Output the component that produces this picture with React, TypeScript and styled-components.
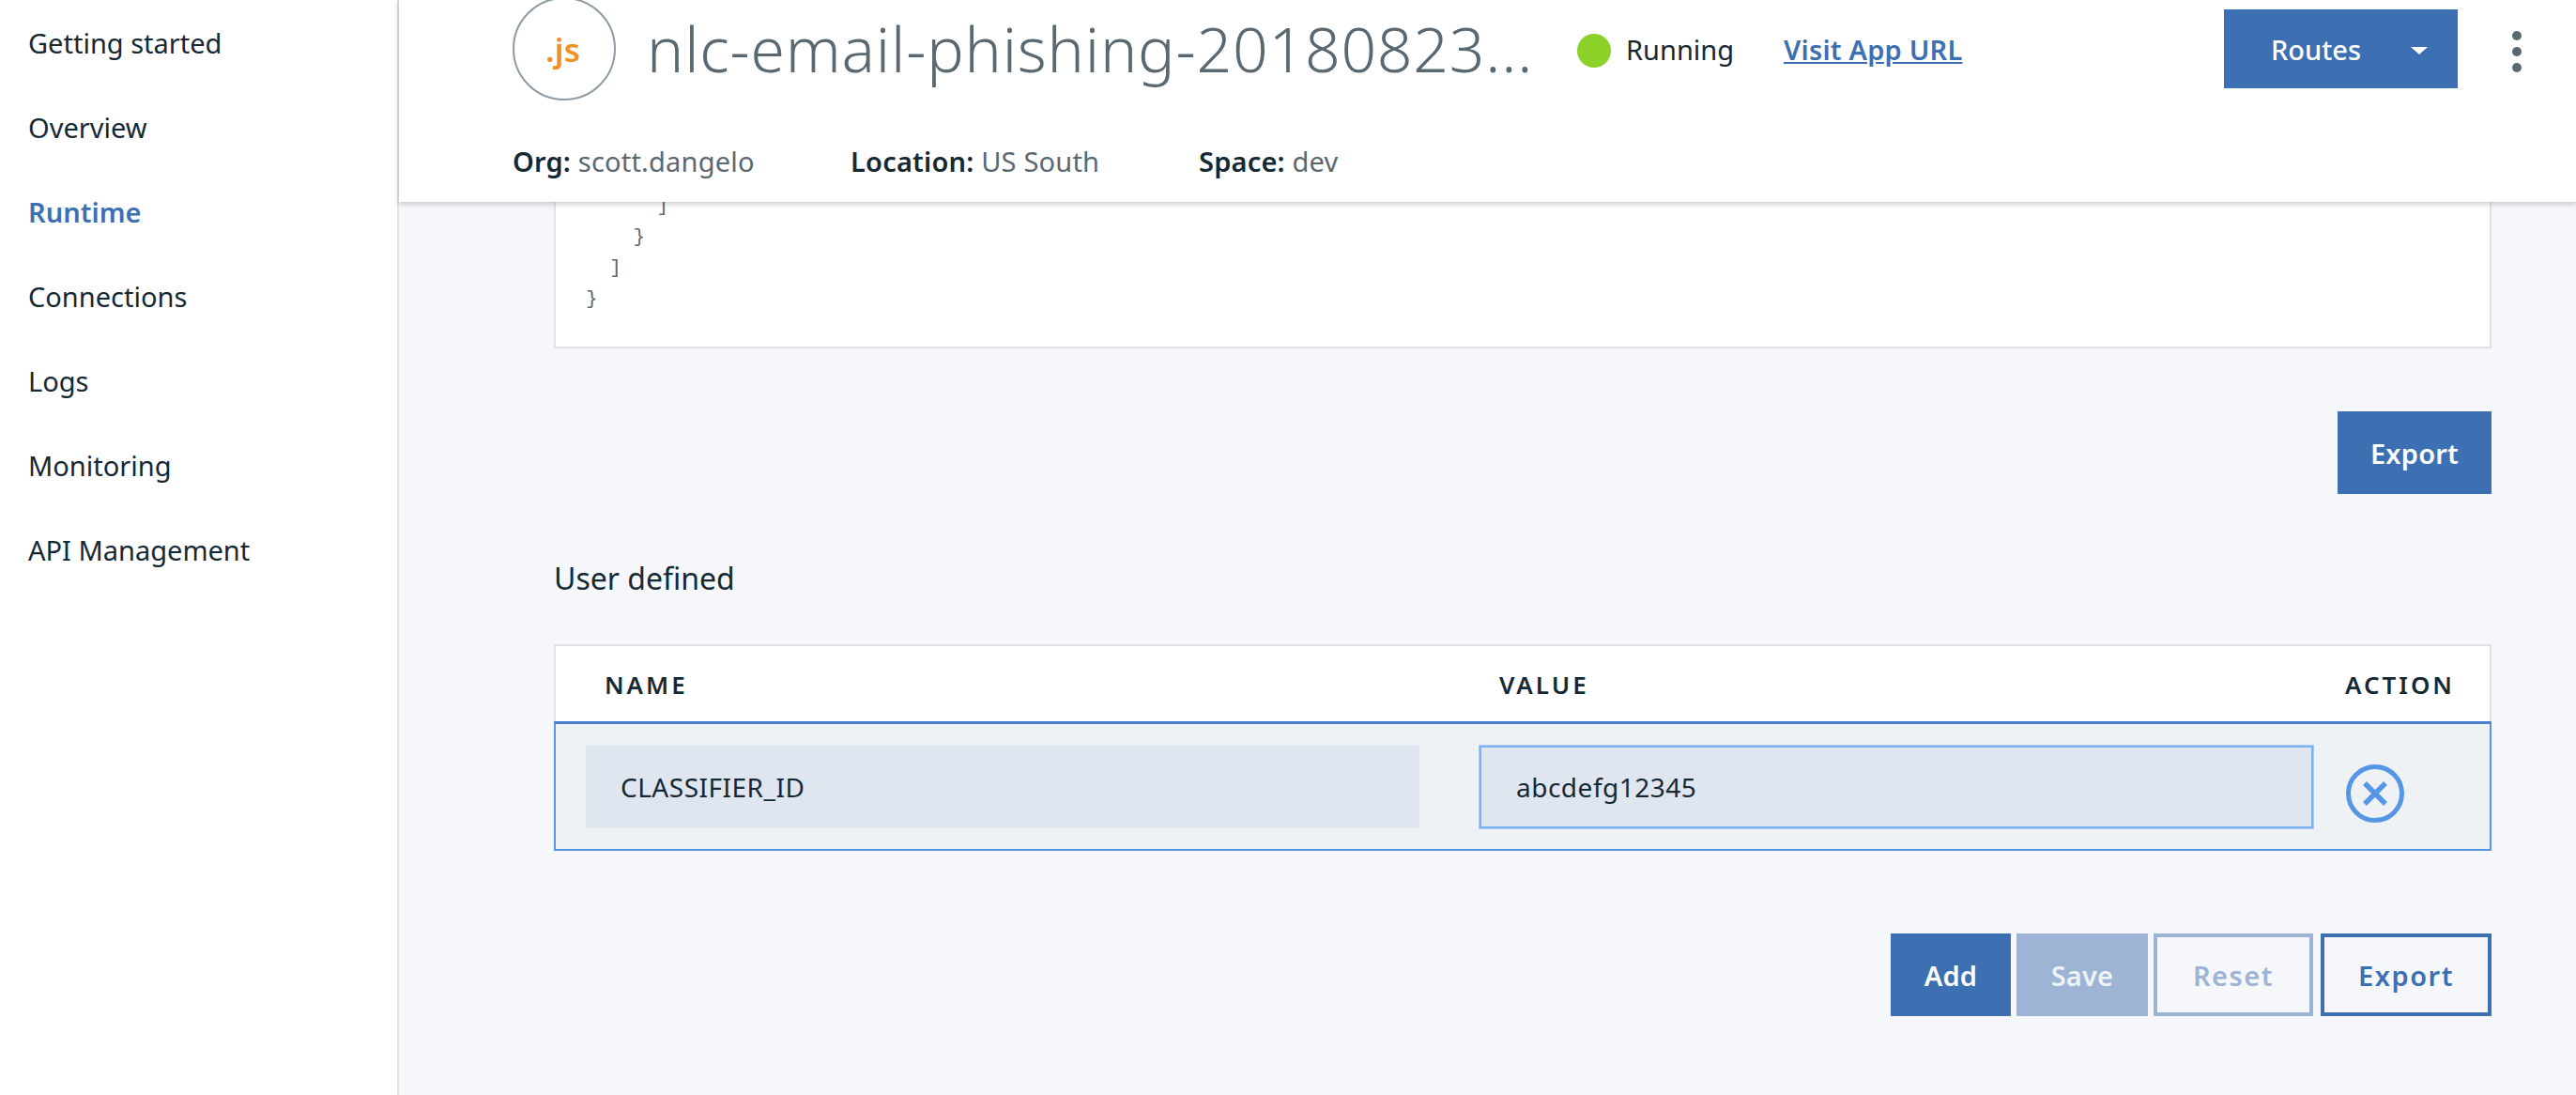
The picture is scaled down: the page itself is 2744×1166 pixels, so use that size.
import React from 'react';
import styled, { createGlobalStyle } from 'styled-components';

const FONT = `'Noto Sans', 'Liberation Sans', sans-serif`;
const MONO = `'Liberation Mono', monospace`;

const GlobalStyle = createGlobalStyle`
  html, body {
    margin: 0;
    padding: 0;
    background: #f5f7fa;
    overflow: hidden;
  }
  * {
    box-sizing: border-box;
  }
`;

const NAV_ITEMS = ['Getting started', 'Overview', 'Runtime', 'Connections', 'Logs', 'Monitoring', 'API Management'];
const CODE_LINES = ['      ]', '    }', '  ]', '}'];

const Page = styled.div`
  display: flex;
  width: 2744px;
  height: 1166px;
  font-family: ${FONT};
  color: #152935;
  overflow: hidden;
`;

const Sidebar = styled.nav`
  flex: none;
  display: flex;
  flex-direction: column;
  width: 425px;
  padding: 1px 0 0 30px;
  background: #fff;
  border-right: 2px solid #dfe3e6;
`;

const NavItem = styled.a<{ $active?: boolean }>`
  height: 90px;
  line-height: 90px;
  font-size: 29px;
  font-weight: ${(p) => (p.$active ? 600 : 400)};
  color: ${(p) => (p.$active ? '#3d70b2' : '#152935')};
`;

const Main = styled.div`
  flex: 1;
  display: flex;
  flex-direction: column;
  min-width: 0;
`;

const Header = styled.header`
  position: relative;
  z-index: 2;
  flex: none;
  height: 215px;
  padding: 0 0 0 121px;
  background: #fff;
  box-shadow: 0 2px 6px rgba(0, 0, 0, 0.22);
`;

const TitleRow = styled.div`
  display: flex;
  align-items: center;
  height: 107px;
`;

const Logo = styled.div`
  flex: none;
  display: flex;
  align-items: center;
  justify-content: center;
  width: 110px;
  height: 110px;
  margin-top: -3px;
  padding-right: 3px;
  border: 2px solid #8c9ba5;
  border-radius: 50%;
  color: #f19027;
  font-size: 35px;
  font-weight: 600;
`;

const Title = styled.h1`
  margin: -5px 0 0 33px;
  width: 945px;
  font-size: 66px;
  font-weight: 300;
  letter-spacing: 0.8px;
  color: #5a6872;
  white-space: nowrap;
`;

const StatusDot = styled.span`
  flex: none;
  width: 36px;
  height: 36px;
  margin-left: 46px;
  border-radius: 50%;
  background: #8cd128;
`;

const StatusText = styled.span`
  margin: -2px 0 0 16px;
  font-size: 29px;
`;

const AppLink = styled.a`
  margin: -2px 0 0 53px;
  font-size: 29px;
  font-weight: 600;
  letter-spacing: 0.2px;
  color: #3d70b2;
  text-decoration: underline;
`;

const RoutesButton = styled.button`
  flex: none;
  display: flex;
  align-items: center;
  justify-content: space-between;
  width: 249px;
  height: 84px;
  margin: 0 0 3px auto;
  padding: 0 32px 0 50px;
  border: 0;
  background: #3d70b2;
  color: #fff;
  font-family: ${FONT};
  font-size: 29px;
  font-weight: 500;
`;

const Caret = styled.span`
  width: 0;
  height: 0;
  margin-top: 4px;
  border-left: 9px solid transparent;
  border-right: 9px solid transparent;
  border-top: 8px solid #fff;
`;

const KebabWrap = styled.div`
  flex: none;
  display: flex;
  justify-content: center;
  width: 126px;
  margin-top: 3px;
`;

const MetaRow = styled.div`
  display: flex;
  align-items: center;
  height: 62px;
  margin-top: 33px;
  font-size: 29px;
`;

const MetaItem = styled.span<{ $width: number }>`
  width: ${(p) => p.$width}px;
  letter-spacing: 0.2px;
  color: #5a6872;
  b {
    font-weight: 600;
    color: #152935;
  }
`;

const Content = styled.main`
  flex: 1;
  display: flex;
  flex-direction: column;
  padding: 0 90px 0 165px;
`;

const CodeBox = styled.pre`
  flex: none;
  display: flex;
  flex-direction: column;
  justify-content: flex-end;
  height: 156px;
  margin: 0;
  padding: 0 0 34px 32px;
  overflow: hidden;
  background: #fff;
  border: 2px solid #dfe3e6;
  border-top: 0;
  font-family: ${MONO};
  font-size: 21px;
  line-height: 33px;
  color: #5a6872;
`;

const ButtonRow = styled.div<{ $top: number }>`
  display: flex;
  justify-content: flex-end;
  gap: 6px;
  margin-top: ${(p) => p.$top}px;
`;

const ActionButton = styled.button<{ $kind: 'primary' | 'disabled' | 'ghost' | 'ghostDisabled'; $width: number }>`
  flex: none;
  width: ${(p) => p.$width}px;
  height: 88px;
  font-family: ${FONT};
  font-size: 29px;
  font-weight: 600;
  letter-spacing: ${(p) => (p.$kind === 'ghost' || p.$kind === 'ghostDisabled' ? '1.5px' : '0.2px')};
  background: ${(p) => (p.$kind === 'primary' ? '#3d70b2' : p.$kind === 'disabled' ? '#9db4d4' : 'transparent')};
  color: ${(p) =>
    p.$kind === 'ghost' ? '#3d70b2' : p.$kind === 'ghostDisabled' ? '#9db4d4' : p.$kind === 'disabled' ? '#eef2f7' : '#fff'};
  border: ${(p) =>
    p.$kind === 'ghost' ? '4px solid #3d70b2' : p.$kind === 'ghostDisabled' ? '4px solid #9db4d4' : '0'};
  ${(p) => p.$kind === 'ghost' && 'margin-left: 2px;'}
`;

const SectionTitle = styled.h2`
  margin: 68px 0 0;
  height: 44px;
  line-height: 44px;
  font-size: 32px;
  font-weight: 400;
`;

const Table = styled.div`
  margin-top: 48px;
`;

const HeadRow = styled.div`
  display: grid;
  grid-template-columns: 953px 1fr auto;
  align-items: center;
  height: 82px;
  padding: 2px 37px 0 52px;
  background: #fff;
  border: 2px solid #dfe3e6;
  border-bottom: 0;
  font-size: 26px;
  font-weight: 600;
  letter-spacing: 3px;
`;

const EditRow = styled.div`
  display: flex;
  align-items: flex-start;
  height: 138px;
  padding: 23px 0 0 32px;
  background: #eff2f5;
  border: 2px solid #5596e6;
  border-top: 3px solid #4a80cc;
`;

const Field = styled.input<{ $focused?: boolean }>`
  flex: none;
  width: 888px;
  height: 88px;
  padding: 0 37px;
  background: #dfe6ef;
  border: ${(p) => (p.$focused ? '2px solid #7cb1ee' : '0')};
  box-shadow: ${(p) => (p.$focused ? '0 0 0 1px rgba(124, 177, 238, 0.6)' : 'none')};
  color: #152935;
  font-family: ${FONT};
  font-size: 28px;
  letter-spacing: 0.5px;
  outline: none;
  &:first-child {
    margin-right: 64px;
  }
`;

const RemoveIcon = styled.svg`
  flex: none;
  width: 62px;
  height: 62px;
  margin: 20px 0 0 35px;
`;

const Kebab = () => (
  <svg width="10" height="44" viewBox="0 0 10 44">
    <circle cx="5" cy="5" r="5" fill="#5a6872" />
    <circle cx="5" cy="22" r="5" fill="#5a6872" />
    <circle cx="5" cy="39" r="5" fill="#5a6872" />
  </svg>
);

export default function App() {
  return (
    <Page>
      <GlobalStyle />
      <Sidebar>
        {NAV_ITEMS.map((item) => (
          <NavItem key={item} $active={item === 'Runtime'}>
            {item}
          </NavItem>
        ))}
      </Sidebar>
      <Main>
        <Header>
          <TitleRow>
            <Logo>.js</Logo>
            <Title>nlc-email-phishing-20180823...</Title>
            <StatusDot />
            <StatusText>Running</StatusText>
            <AppLink>Visit App URL</AppLink>
            <RoutesButton>
              Routes
              <Caret />
            </RoutesButton>
            <KebabWrap>
              <Kebab />
            </KebabWrap>
          </TitleRow>
          <MetaRow>
            <MetaItem $width={360}>
              <b>Org:</b> scott.dangelo
            </MetaItem>
            <MetaItem $width={371}>
              <b>Location:</b> US South
            </MetaItem>
            <MetaItem $width={300}>
              <b>Space:</b> dev
            </MetaItem>
          </MetaRow>
        </Header>
        <Content>
          <CodeBox>
            {CODE_LINES.map((line, i) => (
              <div key={i}>{line}</div>
            ))}
          </CodeBox>
          <ButtonRow $top={67}>
            <ActionButton $kind="primary" $width={164}>
              Export
            </ActionButton>
          </ButtonRow>
          <SectionTitle>User defined</SectionTitle>
          <Table>
            <HeadRow>
              <span>NAME</span>
              <span>VALUE</span>
              <span>ACTION</span>
            </HeadRow>
            <EditRow>
              <Field defaultValue="CLASSIFIER_ID" />
              <Field $focused defaultValue="abcdefg12345" />
              <RemoveIcon viewBox="0 0 62 62">
                <circle cx="31" cy="31" r="28.5" fill="none" stroke="#5596e6" strokeWidth="5" />
                <path d="M20 20 L42 42 M42 20 L20 42" stroke="#5596e6" strokeWidth="5.5" fill="none" />
              </RemoveIcon>
            </EditRow>
          </Table>
          <ButtonRow $top={88}>
            <ActionButton $kind="primary" $width={128}>
              Add
            </ActionButton>
            <ActionButton $kind="disabled" $width={140}>
              Save
            </ActionButton>
            <ActionButton $kind="ghostDisabled" $width={170}>
              Reset
            </ActionButton>
            <ActionButton $kind="ghost" $width={182}>
              Export
            </ActionButton>
          </ButtonRow>
        </Content>
      </Main>
    </Page>
  );
}
